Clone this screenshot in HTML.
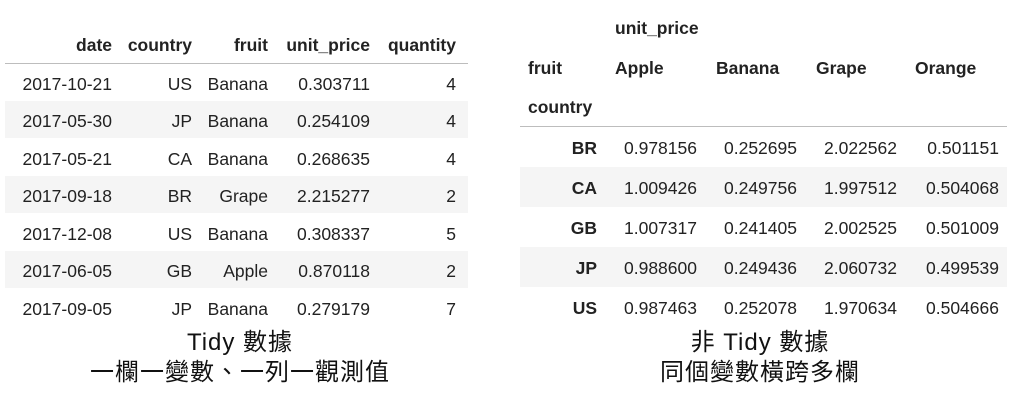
<!DOCTYPE html>
<html><head><meta charset="utf-8"><style>
body{margin:0;width:1019px;height:400px;background:#fff;position:relative;overflow:hidden;font-family:"Liberation Sans","Noto Sans CJK TC",sans-serif;color:#222;}
.t{position:absolute;font-size:17.5px;line-height:20px;white-space:nowrap}
.b{font-weight:bold}
.r{text-align:right}
.stripe{position:absolute;background:#f5f5f5}
.line{position:absolute;height:1px;background:#bdbdbd}
.cap{position:absolute;font-size:24px;line-height:28px;text-align:center;color:#111;letter-spacing:1px;font-family:"Liberation Sans","Noto Sans CJK TC",sans-serif}
</style></head><body>
<div class="line" style="left:5px;top:63px;width:463px"></div>
<div class="stripe" style="left:5px;top:101px;width:463px;height:37px"></div>
<div class="stripe" style="left:5px;top:176px;width:463px;height:37px"></div>
<div class="stripe" style="left:5px;top:251px;width:463px;height:37px"></div>
<div id="L"></div>
<div class="line" style="left:520px;top:126px;width:487px"></div>
<div class="stripe" style="left:520px;top:167px;width:487px;height:40px"></div>
<div class="stripe" style="left:520px;top:247px;width:487px;height:40px"></div>
<div id="R"></div>
<div class="cap" style="left:90px;top:329px;width:300px">Tidy 數據</div>
<div class="cap" style="left:80px;top:359px;width:320px">一欄一變數、一列一觀測值</div>
<div class="cap" style="left:610px;top:329px;width:300px">非 Tidy 數據</div>
<div class="cap" style="left:610px;top:359px;width:300px">同個變數橫跨多欄</div>
<script>
var s='';
var rx=[112,192,268,370,456];
var hd=['date','country','fruit','unit_price','quantity'];
hd.forEach(function(h,i){s+='<div class="t b r" style="left:'+(rx[i]-120)+'px;width:120px;top:35px">'+h+'</div>'});
var rows=[['2017-10-21','US','Banana','0.303711','4'],['2017-05-30','JP','Banana','0.254109','4'],['2017-05-21','CA','Banana','0.268635','4'],['2017-09-18','BR','Grape','2.215277','2'],['2017-12-08','US','Banana','0.308337','5'],['2017-06-05','GB','Apple','0.870118','2'],['2017-09-05','JP','Banana','0.279179','7']];
rows.forEach(function(r,j){var y=73.5+j*37.5;r.forEach(function(c,i){s+='<div class="t r" style="left:'+(rx[i]-120)+'px;width:120px;top:'+y+'px">'+c+'</div>'})});
document.getElementById('L').innerHTML=s;
s='';
s+='<div class="t b" style="left:615px;top:18px">unit_price</div>';
s+='<div class="t b" style="left:528px;top:58px">fruit</div>';
s+='<div class="t b" style="left:528px;top:97px">country</div>';
[['Apple',615],['Banana',716],['Grape',816],['Orange',915]].forEach(function(a){s+='<div class="t b" style="left:'+a[1]+'px;top:58px">'+a[0]+'</div>'});
var vx=[597,697,797,897,999];
var rr=[['BR','0.978156','0.252695','2.022562','0.501151'],['CA','1.009426','0.249756','1.997512','0.504068'],['GB','1.007317','0.241405','2.002525','0.501009'],['JP','0.988600','0.249436','2.060732','0.499539'],['US','0.987463','0.252078','1.970634','0.504666']];
rr.forEach(function(r,j){var y=138+j*40;r.forEach(function(c,i){s+='<div class="t r'+(i==0?' b':'')+'" style="left:'+(vx[i]-120)+'px;width:120px;top:'+y+'px">'+c+'</div>'})});
document.getElementById('R').innerHTML=s;
</script>
</body></html>
